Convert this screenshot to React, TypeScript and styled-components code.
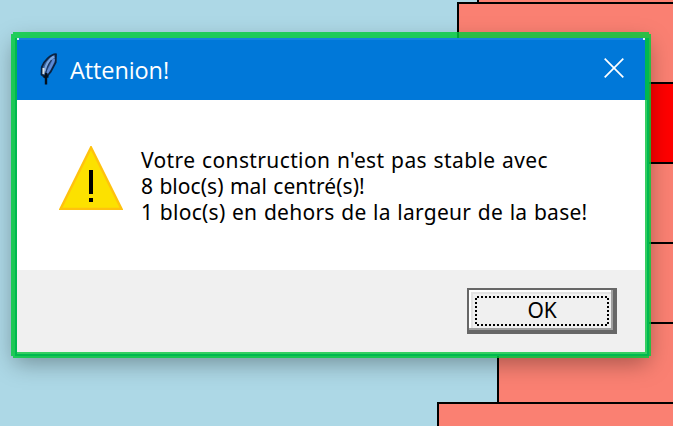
import React from "react";
import styled, { createGlobalStyle } from "styled-components";

const GlobalStyle = createGlobalStyle`
  html, body { margin: 0; padding: 0; overflow: hidden; }
  * { box-sizing: border-box; }
`;

const Desktop = styled.main`
  position: relative;
  width: 673px;
  height: 426px;
  overflow: hidden;
  background: #add8e6;
`;

const Tower = styled.div`
  display: flex;
  flex-direction: column;
`;

const Block = styled.div<{ $offset: number; $height?: number; $color?: string; $open?: boolean }>`
  flex: none;
  height: ${(p) => p.$height ?? 80}px;
  margin-left: ${(p) => p.$offset}px;
  background: ${(p) => p.$color ?? "#fa8072"};
  border-left: 2px solid #000;
  border-top: ${(p) => (p.$open ? "0" : "2px solid #000")};
`;

const Dialog = styled.section`
  position: absolute;
  left: 17px;
  top: 38px;
  width: 628px;
  height: 314px;
  display: flex;
  flex-direction: column;
  box-shadow: 0 8px 22px 3px rgba(0, 0, 0, 0.34);
`;

/* Translucent green outline with notched corners around the dialog. */
const Outline = styled.div`
  position: absolute;
  left: 11px;
  top: 32px;
  width: 640px;
  height: 326px;
  border: 6px solid rgba(1, 204, 60, 0.81);
  clip-path: polygon(2px 0, calc(100% - 2px) 0, calc(100% - 2px) 2px, 100% 2px, 100% calc(100% - 2px), calc(100% - 2px) calc(100% - 2px), calc(100% - 2px) 100%, 2px 100%, 2px calc(100% - 2px), 0 calc(100% - 2px), 0 2px, 2px 2px);

  &::before {
    content: "";
    position: absolute;
    inset: 0 -4px -4px -2px;
    box-shadow: inset 2px 0 #00b850, inset -2px -2px #00b850, inset -4px -4px #34cf61;
  }

  &::after {
    content: "";
    position: absolute;
    top: 0;
    right: -2px;
    width: 2px;
    height: 62px;
    background: #00b850;
  }
`;

const TitleBar = styled.header`
  display: flex;
  align-items: center;
  height: 62px;
  flex: none;
  padding: 0 21px 2px 20px;
  background:
    linear-gradient(#d9ecfa, #d9ecfa) 0 0 / 2px 2px no-repeat,
    linear-gradient(#d9ecfa, #d9ecfa) 100% 0 / 2px 2px no-repeat,
    linear-gradient(#1683dc, #1683dc) 0 0 / 100% 2px no-repeat,
    #0078d9;
  color: #fff;
`;

const Title = styled.h1`
  flex: 1;
  margin: 0 0 0 10px;
  padding-top: 4px;
  font: 400 23.5px/32px "Open Sans", sans-serif;
  letter-spacing: -0.1px;
`;

const CloseButton = styled.button`
  display: flex;
  padding: 0;
  border: 0;
  background: none;
`;

const Message = styled.div`
  display: flex;
  flex: none;
  height: 170px;
  padding: 46px 0 0 42px;
  background: #fff;
`;

const Lines = styled.div`
  display: flex;
  flex-direction: column;
  margin: 1px 0 0 18px;
`;

const Line = styled.span<{ $tracking: number }>`
  font: 400 21px/26px "Noto Sans", sans-serif;
  letter-spacing: ${(p) => p.$tracking}px;
  word-spacing: 0.8px;
  color: #000;
  white-space: nowrap;
`;

const Footer = styled.footer`
  display: flex;
  justify-content: flex-end;
  height: 82px;
  padding: 18px 28px 0 0;
  background: #f0f0f0;
`;

const OkButton = styled.button`
  width: 150px;
  height: 46px;
  padding: 2px;
  background: #f0f0f0;
  border: solid #676767;
  border-width: 2px 4px 4px 2px;
  box-shadow: inset -2px -2px 0 #a0a0a0, inset 2px 2px 0 #fff, inset 4px 4px 0 #e3e3e3;
  font: 400 21px/26px "Noto Sans", sans-serif;
  color: #000;
`;

const FocusRing = styled.span`
  display: flex;
  align-items: center;
  justify-content: center;
  width: 134px;
  height: 30px;
  margin: 2px 0 0 4px;
  background:
    repeating-linear-gradient(90deg, transparent 0 2px, #000 2px 4px) 0 0 / 100% 2px no-repeat,
    repeating-linear-gradient(90deg, transparent 0 2px, #000 2px 4px) 0 100% / 100% 2px no-repeat,
    repeating-linear-gradient(180deg, transparent 0 2px, #000 2px 4px) 0 0 / 2px 100% no-repeat,
    repeating-linear-gradient(180deg, transparent 0 2px, #000 2px 4px) 100% 0 / 2px 100% no-repeat;
`;

const Label = styled.span`
  letter-spacing: -0.3px;
  margin-top: -3px;
`;

const FeatherSvg = styled.svg`
  flex: none;
  margin-top: 2px;
`;

const Feather = () => (
  <FeatherSvg width="23" height="34" viewBox="0 0 23 34" aria-hidden="true">
    <path d="M19 2.200C13.500 2.400 7 9 4.800 15L4.500 22.500l4 3.300 5.300-6.200 4.900-9.200Z" fill="#32619d" stroke="#0b2240" strokeWidth="1.800" strokeLinejoin="round" />
    <path d="M17 4.500c-5 3-8 8-9.500 15" fill="none" stroke="#7ba6e0" strokeWidth="2.400" />
    <path d="M17 7c-2 6-4.500 10-7 14" fill="none" stroke="#5d8ad6" strokeWidth="2.400" />
    <path d="M14.500 8c-3 4-5.500 9-6 16" fill="none" stroke="#1d3661" strokeWidth="1.200" />
    <path d="M6.500 16v6" stroke="#d9e1e6" strokeWidth="2" />
    <path d="M6.500 24.500h5" stroke="#061522" strokeWidth="2.400" />
    <path d="M9 21v11.500" stroke="#04101d" strokeWidth="2.400" />
  </FeatherSvg>
);

const CloseIcon = () => (
  <svg width="20" height="20" viewBox="0 0 20 20" aria-hidden="true">
    <path d="M.7.7l18.600 18.600M19.300.7L.7 19.300" stroke="#fff" strokeWidth="1.700" />
  </svg>
);

const WarningIcon = () => (
  <svg width="64" height="64" viewBox="0 0 64 64" aria-hidden="true">
    <path d="M32 1.500L62.500 63H1.500Z" fill="#fce100" stroke="#ffc20e" strokeWidth="2.400" />
    <path d="M30 24h4v24h-4zM30 52h4v4h-4z" fill="#000" shapeRendering="crispEdges" />
  </svg>
);

export default function App() {
  return (
    <Desktop>
      <GlobalStyle />
      <Tower>
        <Block $offset={477} $height={2} $open />
        <Block $offset={457} />
        <Block $offset={517} $color="#ff0000" />
        <Block $offset={537} />
        <Block $offset={517} />
        <Block $offset={497} />
        <Block $offset={437} />
      </Tower>
      <Dialog role="alertdialog" aria-label="Attenion!">
        <TitleBar>
          <Feather />
          <Title>Attenion!</Title>
          <CloseButton aria-label="Fermer"><CloseIcon /></CloseButton>
        </TitleBar>
        <Message>
          <WarningIcon />
          <Lines>
            <Line $tracking={0.37}>Votre construction n'est pas stable avec</Line>
            <Line $tracking={0.06}>8 bloc(s) mal centré(s)!</Line>
            <Line $tracking={0.27}>1 bloc(s) en dehors de la largeur de la base!</Line>
          </Lines>
        </Message>
        <Footer>
          <OkButton><FocusRing><Label>OK</Label></FocusRing></OkButton>
        </Footer>
      </Dialog>
      <Outline />
    </Desktop>
  );
}
